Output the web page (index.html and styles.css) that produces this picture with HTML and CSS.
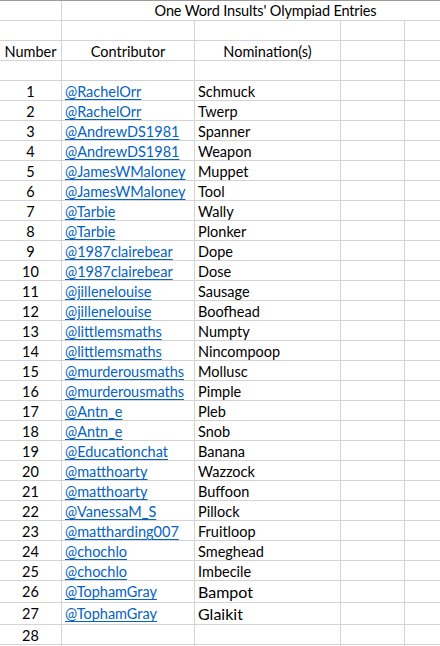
FILE: index.html
```html
<!DOCTYPE html>
<html lang="en">
<head>
<meta charset="utf-8">
<title>One Word Insults' Olympiad Entries</title>
<link rel="stylesheet" href="styles.css">
</head>
<body>
<div class="sheet">
  <div class="row title-row">
    <div class="cell"></div>
    <div class="cell title">One Word Insults' Olympiad Entries</div>
  </div>
  <div class="row"><div class="cell"></div><div class="cell"></div><div class="cell"></div><div class="cell"></div><div class="cell"></div></div>
  <div class="row head">
    <div class="cell num">Number</div>
    <div class="cell center">Contributor</div>
    <div class="cell center">Nomination(s)</div>
    <div class="cell"></div><div class="cell"></div>
  </div>
  <div class="row"><div class="cell"></div><div class="cell"></div><div class="cell"></div><div class="cell"></div><div class="cell"></div></div>
  <div class="row"><div class="cell num">1</div><div class="cell"><a href="#">@RachelOrr</a></div><div class="cell">Schmuck</div><div class="cell"></div><div class="cell"></div></div>
  <div class="row"><div class="cell num">2</div><div class="cell"><a href="#">@RachelOrr</a></div><div class="cell">Twerp</div><div class="cell"></div><div class="cell"></div></div>
  <div class="row"><div class="cell num">3</div><div class="cell"><a href="#">@AndrewDS1981</a></div><div class="cell">Spanner</div><div class="cell"></div><div class="cell"></div></div>
  <div class="row"><div class="cell num">4</div><div class="cell"><a href="#">@AndrewDS1981</a></div><div class="cell">Weapon</div><div class="cell"></div><div class="cell"></div></div>
  <div class="row"><div class="cell num">5</div><div class="cell"><a href="#">@JamesWMaloney</a></div><div class="cell">Muppet</div><div class="cell"></div><div class="cell"></div></div>
  <div class="row"><div class="cell num">6</div><div class="cell"><a href="#">@JamesWMaloney</a></div><div class="cell">Tool</div><div class="cell"></div><div class="cell"></div></div>
  <div class="row"><div class="cell num">7</div><div class="cell"><a href="#">@Tarbie</a></div><div class="cell">Wally</div><div class="cell"></div><div class="cell"></div></div>
  <div class="row"><div class="cell num">8</div><div class="cell"><a href="#">@Tarbie</a></div><div class="cell">Plonker</div><div class="cell"></div><div class="cell"></div></div>
  <div class="row"><div class="cell num">9</div><div class="cell"><a href="#">@1987clairebear</a></div><div class="cell">Dope</div><div class="cell"></div><div class="cell"></div></div>
  <div class="row"><div class="cell num">10</div><div class="cell"><a href="#">@1987clairebear</a></div><div class="cell">Dose</div><div class="cell"></div><div class="cell"></div></div>
  <div class="row"><div class="cell num">11</div><div class="cell"><a href="#">@jillenelouise</a></div><div class="cell">Sausage</div><div class="cell"></div><div class="cell"></div></div>
  <div class="row"><div class="cell num">12</div><div class="cell"><a href="#">@jillenelouise</a></div><div class="cell">Boofhead</div><div class="cell"></div><div class="cell"></div></div>
  <div class="row"><div class="cell num">13</div><div class="cell"><a href="#">@littlemsmaths</a></div><div class="cell">Numpty</div><div class="cell"></div><div class="cell"></div></div>
  <div class="row"><div class="cell num">14</div><div class="cell"><a href="#">@littlemsmaths</a></div><div class="cell">Nincompoop</div><div class="cell"></div><div class="cell"></div></div>
  <div class="row"><div class="cell num">15</div><div class="cell"><a href="#">@murderousmaths</a></div><div class="cell">Mollusc</div><div class="cell"></div><div class="cell"></div></div>
  <div class="row"><div class="cell num">16</div><div class="cell"><a href="#">@murderousmaths</a></div><div class="cell">Pimple</div><div class="cell"></div><div class="cell"></div></div>
  <div class="row"><div class="cell num">17</div><div class="cell"><a href="#">@Antn_e</a></div><div class="cell">Pleb</div><div class="cell"></div><div class="cell"></div></div>
  <div class="row"><div class="cell num">18</div><div class="cell"><a href="#">@Antn_e</a></div><div class="cell">Snob</div><div class="cell"></div><div class="cell"></div></div>
  <div class="row"><div class="cell num">19</div><div class="cell"><a href="#">@Educationchat</a></div><div class="cell">Banana</div><div class="cell"></div><div class="cell"></div></div>
  <div class="row"><div class="cell num">20</div><div class="cell"><a href="#">@matthoarty</a></div><div class="cell">Wazzock</div><div class="cell"></div><div class="cell"></div></div>
  <div class="row"><div class="cell num">21</div><div class="cell"><a href="#">@matthoarty</a></div><div class="cell">Buffoon</div><div class="cell"></div><div class="cell"></div></div>
  <div class="row"><div class="cell num">22</div><div class="cell"><a href="#">@VanessaM_S</a></div><div class="cell">Pillock</div><div class="cell"></div><div class="cell"></div></div>
  <div class="row"><div class="cell num">23</div><div class="cell"><a href="#">@mattharding007</a></div><div class="cell">Fruitloop</div><div class="cell"></div><div class="cell"></div></div>
  <div class="row"><div class="cell num">24</div><div class="cell"><a href="#">@chochlo</a></div><div class="cell">Smeghead</div><div class="cell"></div><div class="cell"></div></div>
  <div class="row"><div class="cell num">25</div><div class="cell"><a href="#">@chochlo</a></div><div class="cell">Imbecile</div><div class="cell"></div><div class="cell"></div></div>
  <div class="row tall"><div class="cell num">26</div><div class="cell"><a href="#">@TophamGray</a></div><div class="cell big">Bampot</div><div class="cell"></div><div class="cell"></div></div>
  <div class="row tall"><div class="cell num">27</div><div class="cell"><a href="#">@TophamGray</a></div><div class="cell big">Glaikit</div><div class="cell"></div><div class="cell"></div></div>
  <div class="row"><div class="cell num">28</div><div class="cell"></div><div class="cell"></div><div class="cell"></div><div class="cell"></div></div>
  <div class="row"><div class="cell num"></div><div class="cell"></div><div class="cell"></div><div class="cell"></div><div class="cell"></div></div>
</div>
</body>
</html>
```
FILE: styles.css
```css
html, body {
  margin: 0;
  padding: 0;
  background: #ffffff;
  overflow: hidden;
}

.sheet {
  width: 100%;
  border-top: 1px solid #9b9b9b;
  font-family: "Lato", "Liberation Sans", sans-serif;
  font-size: 14.5px;
  color: #000000;
}

.row {
  display: grid;
  grid-template-columns: 62px 133px 146px 64px 1fr;
  height: 20px;
  box-sizing: border-box;
  border-bottom: 1px solid #d4d4d4;
}

.row.tall {
  height: 22px;
}

.cell {
  box-sizing: border-box;
  border-right: 1px solid #d4d4d4;
  padding: 2px 3px 0;
  display: flex;
  align-items: flex-start;
  white-space: nowrap;
  line-height: 18px;
  min-width: 0;
}

.row .cell:last-child {
  border-right: none;
}

.title-row {
  grid-template-columns: 62px 1fr;
}

.title {
  justify-content: center;
  padding-left: 32px;
  padding-top: 1px;
  letter-spacing: -0.15px;
}

.num {
  justify-content: center;
}

.center {
  justify-content: center;
}

.big {
  font-size: 16px;
  line-height: 20px;
  padding-top: 1px;
}

a {
  color: #0563c1;
  text-decoration: underline;
  text-underline-offset: 2px;
}
```
